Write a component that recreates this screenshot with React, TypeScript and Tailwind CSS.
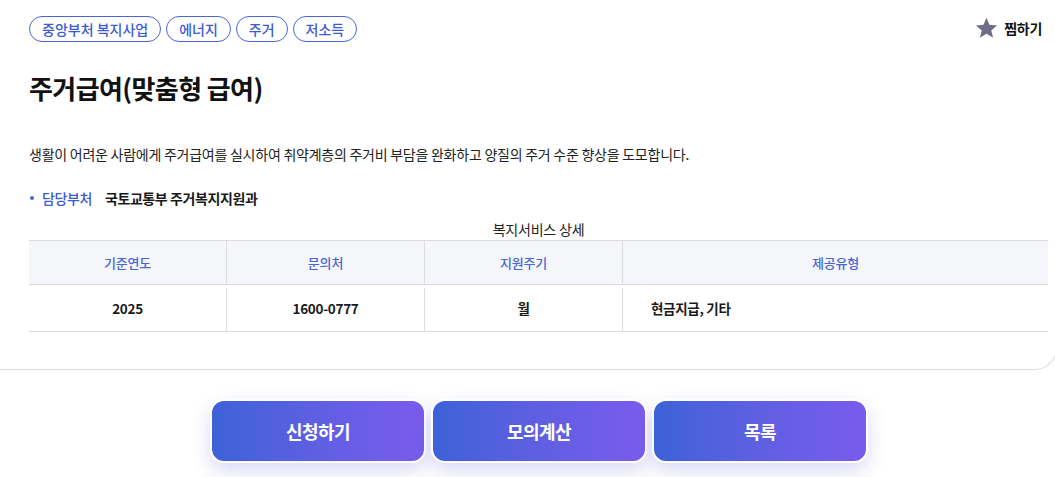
import { useState } from 'react'

const tags = ['중앙부처 복지사업', '에너지', '주거', '저소득']

const columns = [
  { label: '기준연도', value: '2025', w: 'w-[197px]', center: true },
  { label: '문의처', value: '1600-0777', w: 'w-[198px]', center: true },
  { label: '지원주기', value: '월', w: 'w-[198px]', center: true },
  { label: '제공유형', value: '현금지급, 기타', w: 'flex-1', center: false },
]

function StarIcon() {
  return (
    <svg width="23" height="22" viewBox="0 0 24 23" className="fill-[#6c6f87]">
      <path d="M12 0.8l3.1 7.4 7.9 0.6-6 5.2 1.9 7.8L12 17.6l-6.9 4.2 1.9-7.8-6-5.2 7.9-0.6z" />
    </svg>
  )
}

export default function App() {
  const [liked, setLiked] = useState(false)

  return (
    <div
      className="w-[1055px] h-[477px] overflow-hidden bg-white text-[#222]"
      style={{ fontFamily: '"Noto Sans CJK KR", "Noto Sans", sans-serif' }}
    >
      {/* Detail card */}
      <div className="ml-[-20px] w-[1077px] border border-t-0 border-[#dcdcdc] rounded-b-[22px] pl-[48px] pr-[8px] pt-[16px] pb-[37px]">
        <div className="flex items-start justify-between">
          <div className="flex gap-[5px]">
            {tags.map(t => (
              <span
                key={t}
                className="h-[26px] px-[12px] flex items-center rounded-full border border-[#4a66d9] text-[#3d5bd3] text-[14px] font-medium leading-none"
              >
                {t}
              </span>
            ))}
          </div>
          <button
            className="flex items-center gap-[6px] mt-[1px] mr-[6px] text-[14px] font-bold text-[#111]"
            onClick={() => setLiked(!liked)}
          >
            <StarIcon />
            <span className="tracking-[-0.3px]">찜하기</span>
          </button>
        </div>

        <h1 className="mt-[28px] text-[26px] font-bold leading-[36px] tracking-[-0.6px] text-[#111]">
          주거급여(맞춤형 급여)
        </h1>

        <p className="mt-[38px] text-[14px] leading-[20px] tracking-[-0.25px] text-[#222]">
          생활이 어려운 사람에게 주거급여를 실시하여 취약계층의 주거비 부담을 완화하고 양질의 주거 수준 향상을 도모합니다.
        </p>

        <div className="mt-[24px] flex items-center text-[14px] leading-[20px] tracking-[-0.4px]">
          <span className="ml-[1px] mr-[8px] w-[4px] h-[4px] rounded-full bg-[#4a66d9]" />
          <span className="text-[#3d5bd3] font-medium">담당부처</span>
          <span className="ml-[13px] font-semibold text-[#1a1a1a]">국토교통부 주거복지지원과</span>
        </div>

        <div className="mt-[11px] text-center text-[14px] leading-[20px] tracking-[-0.2px] text-[#222]">
          복지서비스 상세
        </div>

        <div className="mt-[1px] border-t border-b border-[#dcdcdc]">
          <div className="flex h-[44px] bg-[#f5f6fa] border-b border-[#dcdcdc]">
            {columns.map((c, i) => (
              <div
                key={c.label}
                className={`${c.w} flex items-center justify-center text-[13px] font-medium tracking-[-0.2px] text-[#4866d6] ${i > 0 ? 'border-l border-[#dcdcdc]' : ''}`}
              >
                {c.label}
              </div>
            ))}
          </div>
          <div className="flex h-[46px]">
            {columns.map((c, i) => (
              <div
                key={c.label}
                className={`${c.w} flex items-center ${c.center ? 'justify-center' : 'justify-start pl-[28px]'} text-[13.5px] font-semibold tracking-[-0.3px] text-[#1a1a1a] ${i > 0 ? 'border-l border-[#dcdcdc] mt-[3px]' : ''}`}
              >
                <span className={i > 0 ? '-mt-[3px]' : ''}>{c.value}</span>
              </div>
            ))}
          </div>
        </div>
      </div>

      {/* Actions */}
      <div className="mt-[29px] ml-[210px] flex gap-[5px]">
        {['신청하기', '모의계산', '목록'].map(label => (
          <button
            key={label}
            className="w-[216px] h-[64px] rounded-[14px] border-2 border-white bg-gradient-to-r from-[#3c62d8] to-[#7a5bec] text-white text-[18px] font-bold tracking-[-0.5px] shadow-[0_8px_18px_rgba(90,90,210,0.22)]"
          >
            {label}
          </button>
        ))}
      </div>
    </div>
  )
}
